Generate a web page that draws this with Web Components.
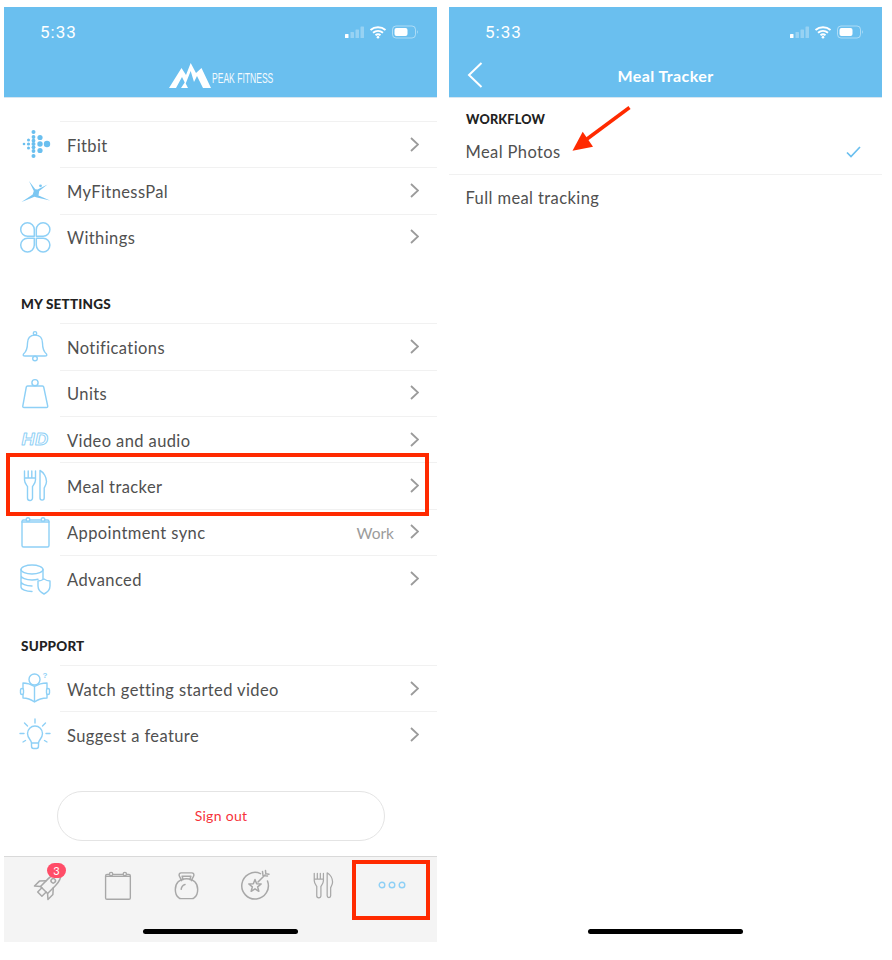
<!DOCTYPE html>
<html lang="en">
<head>
<meta charset="utf-8">
<title>Peak Fitness settings</title>
<style>
    html, body { margin: 0; padding: 0; background: #fff; }
    body { font-family: "Lato", "Liberation Sans", sans-serif; color: #505050; }
</style>
</head>
<body>
<shot-page>
    <phone-screen>
        <status-bar></status-bar>
        <nav-bar logo></nav-bar>
        <settings-group offset="23">
            <setting-row icon="fitbit">Fitbit</setting-row>
            <setting-row icon="mfp">MyFitnessPal</setting-row>
            <setting-row icon="withings">Withings</setting-row>
        </settings-group>
        <settings-group heading="MY SETTINGS" offset="32.5">
            <setting-row icon="bell">Notifications</setting-row>
            <setting-row icon="bag">Units</setting-row>
            <setting-row icon="hd">Video and audio</setting-row>
            <setting-row icon="meal">Meal tracker</setting-row>
            <setting-row icon="calendar" detail="Work">Appointment sync</setting-row>
            <setting-row icon="database">Advanced</setting-row>
        </settings-group>
        <settings-group heading="SUPPORT" offset="32.5">
            <setting-row icon="reader">Watch getting started video</setting-row>
            <setting-row icon="bulb">Suggest a feature</setting-row>
        </settings-group>
        <sign-out>Sign out</sign-out>
        <tab-bar></tab-bar>
    </phone-screen>
    <phone-screen>
        <status-bar></status-bar>
        <nav-bar back>Meal Tracker</nav-bar>
        <option-list heading="WORKFLOW">
            <option-row checked>Meal Photos</option-row>
            <option-row>Full meal tracking</option-row>
        </option-list>
        <home-bar></home-bar>
    </phone-screen>
    <mark-box style="left:6px;top:453px;width:423px;height:63px"></mark-box>
    <mark-box style="left:352px;top:860px;width:78px;height:60px"></mark-box>
    <mark-arrow></mark-arrow>
</shot-page>

<script>
// every icon is drawn in a 36 x 36 box, centred on 18,18
const ICONS = {
    fitbit: `<g fill="#6abfef" stroke="none">
        <circle cx="7" cy="18" r="1.3"/>
        <circle cx="11.5" cy="14" r="1.5"/><circle cx="11.5" cy="18" r="1.6"/><circle cx="11.5" cy="22" r="1.5"/>
        <circle cx="16.5" cy="6" r="2"/><circle cx="16.5" cy="11" r="1.9"/><circle cx="16.5" cy="14.7" r="1.9"/><circle cx="16.5" cy="18" r="2"/><circle cx="16.5" cy="21.3" r="1.9"/><circle cx="16.5" cy="25" r="1.9"/><circle cx="16.5" cy="30" r="2"/>
        <circle cx="23" cy="11.5" r="2.6"/><circle cx="23" cy="18" r="2.7"/><circle cx="23" cy="24.5" r="2.6"/>
        <circle cx="30" cy="18" r="3.2"/>
    </g>`,
    mfp: `<path fill="#7cc7f2" stroke="none" d="M12 9 L18.300 17.300 L20.500 17.500 L30.500 12.500 L22.200 19 L21.500 23.500 L33 28.500 L20 25.500 L17.500 24.800 L4.500 30 L15.700 22.500 L16.800 19 Z"/><circle cx="23.500" cy="13.800" r="1.400" fill="#7cc7f2" stroke="none"/>`,
    withings: `<g stroke-width="1.5"><path d="M17.300 17.300 H10.500 a6.800 6.800 0 1 1 6.800 -6.800 Z"/>
        <path d="M19.300 17.300 H26.100 a6.800 6.800 0 1 0 -6.800 -6.800 Z"/>
        <path d="M17.300 19.300 H10.500 a6.800 6.800 0 1 0 6.800 6.800 Z"/>
        <path d="M19.300 19.300 H26.100 a6.800 6.800 0 1 1 -6.800 6.800 Z"/></g>`,
    bell: `<path d="M18 7 c-5 0 -7.500 3.500 -7.500 8 c0 6 -1 8.500 -4 11 q-1 2 1.500 2 h20 q2.500 0 1.500 -2 c-3 -2.500 -4 -5 -4 -11 c0 -4.500 -2.500 -8 -7.500 -8z"/><circle cx="18" cy="5.300" r="1.700"/><circle cx="18" cy="30.500" r="2.300"/>`,
    bag: `<path d="M10.500 11 H25.500 Q26.500 11 26.700 12 L30.700 31 Q31 32.500 29.500 32.500 H7 Q5.500 32.500 5.800 31 L9.300 12 Q9.500 11 10.500 11 Z"/><circle cx="18" cy="7.700" r="3.100"/>`,
    hd: `<text x="4.500" y="24" font-family="Liberation Sans, sans-serif" font-size="16" font-style="italic" font-weight="700" fill="#fff" stroke="currentColor" stroke-width=".9" textLength="27" lengthAdjust="spacingAndGlyphs">HD</text>`,
    meal: `<path d="M7.500 4 V13 c0 3 2 5 3 6.500 V31 a2.500 2.500 0 0 0 5 0 V19.500 c1 -1.500 3 -3.500 3 -6.500 V4 M11.200 4 V11 M14.800 4 V11 M7.500 11 H18.500"/><path d="M23 3.500 c4 2 6.500 7 6.500 11 c0 3 -1.500 5 -2.300 6.500 V31 a2.100 2.100 0 0 1 -4.200 0 Z"/>`,
    calendar: `<rect x="5" y="6" width="27" height="27" rx="1.500"/><path d="M5 8 H32"/><circle cx="11" cy="5.500" r="1.800" style="fill:var(--icon-bg,#fff)"/><circle cx="26" cy="5.500" r="1.800" style="fill:var(--icon-bg,#fff)"/>`,
    database: `<ellipse cx="15" cy="9.500" rx="11" ry="4.500"/><path d="M4 9.500 V27 c0 2.500 5 4.500 11 4.500 M26 9.500 V19 M4 15.500 c0 2.500 5 4.500 11 4.500 c2 0 4 -.2 6 -.7 M4 21.500 c0 2.500 5 4.500 11 4.500"/><path fill="#fff" d="M27 19 q3 2 6 2 v5 q0 5 -6 8 q-6 -3 -6 -8 v-5 q3 0 6 -2 z"/>`,
    reader: `<circle cx="17.500" cy="9.500" r="5.500"/><path d="M6 13 Q12 13 17.500 16.500 Q23 13 30 13 V28 Q23 28 17.500 32 Q12 28 6 28 Z M17.500 16.500 V32"/><rect x="3.500" y="18.500" width="3" height="6" rx="1.500" fill="#fff"/><rect x="29.500" y="18.500" width="3" height="6" rx="1.500" fill="#fff"/><text x="25.500" y="8" font-family="Liberation Sans, sans-serif" font-size="8" font-weight="700" fill="currentColor" stroke="none">?</text>`,
    bulb: `<path d="M14.500 27 c0 -3 -4 -4.500 -4 -9.500 a7.500 7.500 0 0 1 15 0 c0 5 -4 6.500 -4 9.500 Z"/><path d="M14.500 27 v3 q0 2.500 2 2.500 h3 q2 0 2 -2.500 v-3 M18 3 v4 M7.500 7 l3 3 M28.500 7 l-3 3 M3 17.500 h4 M29 17.500 h4 M6 26 l2.500 -1.500 M30 26 l-2.500 -1.500"/>`,
    rocket: `<g transform="rotate(45 18 18)"><path d="M18 1 C22.500 5 23 10 23 14 V25 H13 V14 C13 10 13.500 5 18 1 Z"/><circle cx="18" cy="12" r="2.200"/><path d="M13 17 L8.500 22 V29 L13 25 M23 17 L27.500 22 V29 L23 25 M15 25 V31 H21 V25"/></g>`,
    kettlebell: `<path d="M13 13 L10.500 8 Q10 5 12.500 5 H23.500 Q26 5 25.500 8 L23 13 M14.500 12 L13.500 8.500 H22.500 L21.500 12"/><path d="M18 11 C25.500 11 29.500 16 29.500 22 C29.500 26 28 29 26 30.500 Q25 31.500 23.500 31.500 H12.500 Q11 31.500 10 30.500 C8 29 6.500 26 6.500 22 C6.500 16 10.500 11 18 11 Z"/><path d="M12.500 22 Q13 18 16.500 17"/>`,
    target: `<path d="M23.500 6.600 A13.300 13.300 0 1 0 30.500 14"/><path d="M18 12.500 L19.650 16.730 L24.180 17 L20.660 19.870 L21.820 24.260 L18 21.800 L14.180 24.260 L15.340 19.870 L11.820 17 L16.350 16.730 Z"/><path d="M21 15 L28 8 M25.500 4.500 L26 8.500 L30.500 9 M28.500 3.500 L28.800 6.800 L32 7.200"/>`
};

class UiIcon extends HTMLElement {
    connectedCallback() {
        const name = this.getAttribute('name');
        const size = this.getAttribute('size') || 36;
        this.attachShadow({ mode: 'open' }).innerHTML = `
            <style>
                :host { display: block; width: ${size}px; height: ${size}px; }
                svg { display: block; width: 100%; height: 100%; overflow: visible; fill: none; stroke: currentColor; stroke-width: var(--icon-stroke, 1.4); stroke-linejoin: round; stroke-linecap: round; }
            </style>
            <svg viewBox="0 0 36 36">${ICONS[name]}</svg>
        `;
    }
}

class ShotPage extends HTMLElement {
    constructor() {
        super();
        this.attachShadow({ mode: 'open' }).innerHTML = `
            <style>
                :host { display: flex; position: relative; width: 892px; height: 960px; box-sizing: border-box; padding: 7px 0 0 4px; gap: 12px; overflow: hidden; }
            </style>
            <slot></slot>
        `;
    }
}

class PhoneScreen extends HTMLElement {
    constructor() {
        super();
        this.attachShadow({ mode: 'open' }).innerHTML = `
            <style>
                :host { display: flex; flex-direction: column; width: 433px; height: 935px; background: #fff; }
            </style>
            <slot></slot>
        `;
    }
}

class StatusBar extends HTMLElement {
    constructor() {
        super();
        this.attachShadow({ mode: 'open' }).innerHTML = `
            <style>
                :host { display: flex; align-items: center; justify-content: space-between; height: 50px; padding: 0 18px 0 36px; background: #6abfef; color: #fff; font: 17px "Roboto", "Liberation Sans", sans-serif; letter-spacing: 1px; }
                svg { display: block; }
            </style>
            <span>5:33</span>
            <svg width="74" height="14" viewBox="0 0 74 14">
                <g fill="#fff">
                    <rect x="0" y="9" width="3.500" height="4" rx=".6"/>
                    <g opacity=".3">
                        <rect x="5.500" y="7" width="3.500" height="6" rx=".6"/>
                        <rect x="10.500" y="4.500" width="3.500" height="8.500" rx=".6"/>
                        <rect x="15.500" y="1.500" width="3.500" height="11.500" rx=".6"/>
                    </g>
                </g>
                <path d="M25.500 5 a12 12 0 0 1 15 0 M28 7.800 a8 8 0 0 1 10 0 M30.500 10.300 a4 4 0 0 1 5 0" fill="none" stroke="#fff" stroke-width="2"/>
                <circle cx="33" cy="12.300" r="1.300" fill="#fff"/>
                <rect x="47.500" y="1" width="23" height="12" rx="3.500" fill="none" stroke="#fff" stroke-opacity=".45"/>
                <rect x="49.500" y="3" width="13" height="8" rx="2" fill="#fff"/>
                <path d="M72 5 q1.800 2 0 4 z" fill="#fff" fill-opacity=".5"/>
            </svg>
        `;
    }
}

class NavBar extends HTMLElement {
    connectedCallback() {
        const isLogo = this.hasAttribute('logo');
        const isBack = this.hasAttribute('back');
        this.attachShadow({ mode: 'open' }).innerHTML = `
            <style>
                :host { display: flex; align-items: center; justify-content: center; position: relative; height: 41px; padding-bottom: 4px; box-sizing: border-box; background: #6abfef; color: #fff; border-bottom: 1px solid #d6e6f1; font-weight: 700; font-size: 16px; letter-spacing: .4px; }
                .logo { display: flex; align-items: flex-end; gap: 1px; width: 104px; margin-left: 1px; }
                .logo svg { display: block; flex: none; }
                .name { display: block; flex: none; width: 61px; margin-bottom: 3px; font: 400 15px/15px "Liberation Sans", sans-serif; letter-spacing: 0; white-space: nowrap; transform: scaleX(.57); transform-origin: left; opacity: .92; }
                .back { position: absolute; left: 18px; top: 5px; display: block; }
            </style>
            ${isBack ? `<svg class="back" width="16" height="26" viewBox="0 0 16 26"><path d="M14.500 1 L2 13 L14.500 25" fill="none" stroke="#fff" stroke-width="2"/></svg>` : ''}
            ${isLogo ? `<div class="logo">
                <svg width="42" height="25" viewBox="0 0 42 25"><path fill="#fff" d="M0 25 L12.500 5 L17 12 L21.700 0 L27 10 L32.500 5 L42 25 H34 L28 13 L25 19 L21.700 8 L16.500 21 L13 14 L7 25 Z M12 25 L16 19 L19 25 Z"/></svg>
                <span class="name">PEAK FITNESS</span>
            </div>` : '<slot></slot>'}
        `;
    }
}

class SettingsGroup extends HTMLElement {
    connectedCallback() {
        const heading = this.getAttribute('heading');
        const offset = this.getAttribute('offset') || 0;
        this.attachShadow({ mode: 'open' }).innerHTML = `
            <style>
                :host { display: block; margin-top: ${offset}px; }
                h2 { margin: 0 0 7px; padding-left: 17px; height: 24px; font-size: 13.500px; line-height: 24px; font-weight: 900; color: #222; letter-spacing: .2px; }
            </style>
            ${heading ? `<h2>${heading}</h2>` : ''}
            <slot></slot>
        `;
    }
}

class SettingRow extends HTMLElement {
    connectedCallback() {
        const detail = this.getAttribute('detail');
        this.attachShadow({ mode: 'open' }).innerHTML = `
            <style>
                :host { display: flex; height: 46.330px; color: #505050; font-size: 16.500px; letter-spacing: .4px; }
                ui-icon { margin: 5px 7px 0 13px; color: #8ed0f6; }
                .body { flex: 1; display: flex; align-items: center; border-top: 1px solid #f1f1f1; padding: 0 18px 0 7px; }
                .label { flex: 1; padding-top: 2px; }
                .detail { color: #9b9b9b; margin-right: 16px; padding-top: 2px; font-size: 15.500px; letter-spacing: 0; }
                svg { display: block; margin-top: -1px; }
            </style>
            <ui-icon name="${this.getAttribute('icon')}"></ui-icon>
            <div class="body">
                <span class="label"><slot></slot></span>
                ${detail ? `<span class="detail">${detail}</span>` : ''}
                <svg width="9" height="15" viewBox="0 0 9 15"><path d="M1 1 L8 7.500 L1 14" fill="none" stroke="#9b9b9b" stroke-width="1.800"/></svg>
            </div>
        `;
    }
}

class SignOut extends HTMLElement {
    constructor() {
        super();
        this.attachShadow({ mode: 'open' }).innerHTML = `
            <style>
                :host { display: flex; align-items: center; justify-content: center; box-sizing: border-box; width: 328px; height: 50px; margin: 33px 0 0 53px; border: 1px solid #e4e4e4; border-radius: 25px; color: #f6333a; font-size: 14px; letter-spacing: .3px; }
            </style>
            <slot></slot>
        `;
    }
}

class TabBar extends HTMLElement {
    constructor() {
        super();
        this.attachShadow({ mode: 'open' }).innerHTML = `
            <style>
                :host { display: flex; flex-direction: column; margin-top: auto; height: 86px; box-sizing: border-box; background: #f4f4f4; border-top: 1px solid #d9d9d9; --icon-bg: #f4f4f4; --icon-stroke: 1.5; }
                .tabs { display: grid; grid-template-columns: repeat(6, 68.500px); padding: 10px 0 0 11px; color: #a8a8a8; }
                .tab { position: relative; display: flex; align-items: center; justify-content: center; height: 36px; }
                .badge { position: absolute; left: 32px; top: -4px; width: 19px; height: 15px; border-radius: 8px; background: #ff4d68; color: #fff; font-size: 11px; line-height: 15px; text-align: center; }
                .dots { display: block; color: #8ed0f6; }
                home-bar { margin-top: auto; }
            </style>
            <div class="tabs">
                <div class="tab"><ui-icon name="rocket"></ui-icon><span class="badge">3</span></div>
                <div class="tab"><ui-icon name="calendar" size="33"></ui-icon></div>
                <div class="tab"><ui-icon name="kettlebell" size="35"></ui-icon></div>
                <div class="tab"><ui-icon name="target"></ui-icon></div>
                <div class="tab"><ui-icon name="meal" size="30"></ui-icon></div>
                <div class="tab">
                    <svg class="dots" width="28" height="8" viewBox="0 0 28 8" fill="none" stroke="currentColor" stroke-width="1.400"><circle cx="4" cy="4" r="2.800"/><circle cx="14" cy="4" r="2.800"/><circle cx="24" cy="4" r="2.800"/></svg>
                </div>
            </div>
            <home-bar></home-bar>
        `;
    }
}

class HomeBar extends HTMLElement {
    constructor() {
        super();
        this.attachShadow({ mode: 'open' }).innerHTML = `
            <style>
                :host { display: block; align-self: center; width: 155px; height: 5px; margin: auto 0 8px; border-radius: 3px; background: #000; }
            </style>
        `;
    }
}

class OptionList extends HTMLElement {
    connectedCallback() {
        this.attachShadow({ mode: 'open' }).innerHTML = `
            <style>
                :host { display: block; }
                h2 { margin: 9px 0 0 17px; height: 22px; font-size: 12.700px; line-height: 24px; font-weight: 900; color: #222; letter-spacing: .2px; }
            </style>
            <h2>${this.getAttribute('heading')}</h2>
            <slot></slot>
        `;
    }
}

class OptionRow extends HTMLElement {
    connectedCallback() {
        const isChecked = this.hasAttribute('checked');
        this.attachShadow({ mode: 'open' }).innerHTML = `
            <style>
                :host { display: flex; align-items: center; justify-content: space-between; box-sizing: border-box; height: 46px; padding: 0 21px 0 16.500px; color: #505050; font-size: 16.500px; letter-spacing: .4px; border-bottom: 1px solid #f1f1f1; }
                :host(:last-child) { border-bottom: 0; }
                svg { display: block; }
            </style>
            <slot></slot>
            ${isChecked ? `<svg width="15" height="12" viewBox="0 0 15 12"><path d="M1 6.500 L5 10.500 L14 1" fill="none" stroke="#6abfef" stroke-width="1.700"/></svg>` : ''}
        `;
    }
}

class MarkBox extends HTMLElement {
    constructor() {
        super();
        this.attachShadow({ mode: 'open' }).innerHTML = `
            <style>
                :host { position: absolute; box-sizing: border-box; border: 4px solid #ff2a00; }
            </style>
        `;
    }
}

class MarkArrow extends HTMLElement {
    constructor() {
        super();
        this.attachShadow({ mode: 'open' }).innerHTML = `
            <style>
                :host { position: absolute; left: 560px; top: 100px; width: 80px; height: 60px; }
                svg { display: block; }
            </style>
            <svg width="80" height="60" viewBox="0 0 80 60">
                <path d="M69.500 7.500 L27 39" stroke="#ff2a00" stroke-width="3.500" fill="none"/>
                <path d="M12.500 50.700 L22.700 31.700 L33 46.700 Z" fill="#ff2a00"/>
            </svg>
        `;
    }
}

customElements.define('ui-icon', UiIcon);
customElements.define('shot-page', ShotPage);
customElements.define('phone-screen', PhoneScreen);
customElements.define('status-bar', StatusBar);
customElements.define('nav-bar', NavBar);
customElements.define('settings-group', SettingsGroup);
customElements.define('setting-row', SettingRow);
customElements.define('sign-out', SignOut);
customElements.define('tab-bar', TabBar);
customElements.define('home-bar', HomeBar);
customElements.define('option-list', OptionList);
customElements.define('option-row', OptionRow);
customElements.define('mark-box', MarkBox);
customElements.define('mark-arrow', MarkArrow);
</script>
</body>
</html>
